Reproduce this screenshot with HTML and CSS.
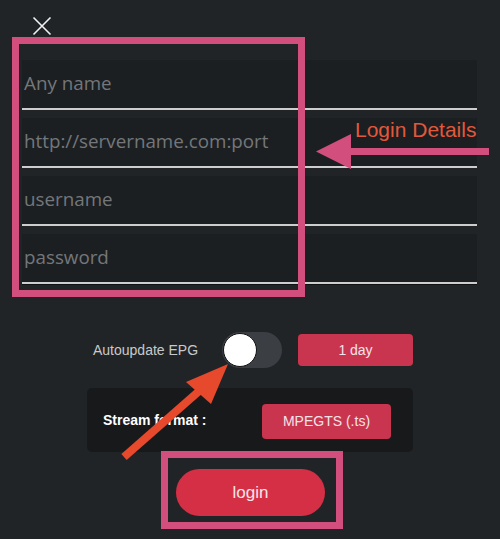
FILE: index.html
```html
<!DOCTYPE html>
<html>
<head>
<meta charset="utf-8">
<link rel="stylesheet" href="styles.css">
</head>
<body>
<div class="screen">
  <div class="topbar">
    <svg class="close" width="20" height="20" viewBox="0 0 20 20"><path d="M1.5 1.5 L18.5 18.5 M18.5 1.5 L1.5 18.5" stroke="#f2f2f2" stroke-width="1.6" fill="none"/></svg>
  </div>
  <div class="fields">
    <div class="field"><span class="ph">Any name</span></div>
    <div class="field"><span class="ph">http://servername.com:port</span></div>
    <div class="field"><span class="ph">username</span></div>
    <div class="field"><span class="ph">password</span></div>
  </div>
  <div class="epg-row">
    <span class="epg-label">Autoupdate EPG</span>
    <div class="toggle"><div class="knob"></div></div>
    <div class="btn btn-day">1 day</div>
  </div>
  <div class="stream-box">
    <span class="stream-label">Stream format :</span>
    <div class="btn btn-format">MPEGTS (.ts)</div>
  </div>
  <div class="login-wrap">
    <div class="login-btn">login</div>
  </div>

  <div class="hl hl-fields"></div>
  <div class="hl hl-login"></div>
  <div class="note">Login Details</div>
  <svg class="arrows" width="500" height="539" viewBox="0 0 500 539">
    <rect x="346" y="148" width="143" height="7" fill="#d24f7d"/>
    <polygon points="316,151.5 351,134 351,169" fill="#d24f7d"/>
    <line x1="124" y1="457" x2="206" y2="385" stroke="#e6492c" stroke-width="8"/>
    <polygon points="228,364 186,382 211,404" fill="#e6492c"/>
  </svg>
</div>
</body>
</html>
```
FILE: styles.css
```css
html, body {
  margin: 0;
  padding: 0;
  background: #212427;
}
.screen {
  position: relative;
  width: 500px;
  height: 539px;
  overflow: hidden;
  background: #212427;
  font-family: "Liberation Sans", Arial, sans-serif;
}
.topbar {
  height: 52px;
  padding-left: 32px;
  padding-top: 16px;
  box-sizing: border-box;
}
.close { display: block; }
.fields {
  margin: 0 23px 0 22px;
  display: flex;
  flex-direction: column;
}
.field {
  height: 58px;
  box-sizing: border-box;
  display: flex;
  align-items: center;
  padding-left: 2px;
  padding-top: 6px;
  background: linear-gradient(#212427 0, #212427 8px, #1c1f22 8px);
  border-bottom: 2px solid #cdcdcd;
  box-shadow: 0 1px 0 #0f1112;
}
.ph {
  font-family: "Open Sans", sans-serif;
  font-size: 18.8px;
  color: #74777a;
}
.epg-row {
  display: flex;
  align-items: center;
  margin-top: 48px;
  padding-left: 93px;
  height: 36px;
}
.epg-label {
  font-size: 14px;
  color: #c9c9c9;
  width: 129px;
}
.toggle {
  width: 60px;
  height: 36px;
  border-radius: 18px;
  background: #3b3e43;
  position: relative;
  margin-right: 16px;
}
.knob {
  position: absolute;
  left: 1px;
  top: 1px;
  width: 32px;
  height: 32px;
  border-radius: 50%;
  background: #ffffff;
  border: 1px solid #111;
}
.btn {
  background: #c9354f;
  color: #f4e4e8;
  font-size: 14px;
  display: flex;
  align-items: center;
  justify-content: center;
  border-radius: 4px;
}
.btn-day {
  width: 115px;
  height: 32px;
}
.stream-box {
  margin: 20px 0 0 87px;
  width: 326px;
  height: 64px;
  box-sizing: border-box;
  background: #17191b;
  border-radius: 5px;
  display: flex;
  align-items: center;
  padding-left: 16px;
}
.stream-label {
  font-size: 14px;
  font-weight: bold;
  color: #ffffff;
  width: 159px;
}
.btn-format {
  width: 129px;
  height: 35px;
  margin-top: 2px;
}
.login-wrap {
  display: flex;
  justify-content: center;
  padding-top: 17px;
  padding-left: 1px;
}
.login-btn {
  width: 149px;
  height: 47px;
  border-radius: 24px;
  background: #d52f45;
  color: #f6e6e9;
  font-size: 17px;
  display: flex;
  align-items: center;
  justify-content: center;
}
.hl {
  position: absolute;
  box-sizing: border-box;
  border: 7px solid #d24f7d;
}
.hl-fields {
  left: 12px;
  top: 37px;
  width: 293px;
  height: 260px;
}
.hl-login {
  left: 161px;
  top: 451px;
  width: 182px;
  height: 78px;
}
.note {
  position: absolute;
  left: 355px;
  top: 118px;
  font-size: 21px;
  color: #e2583a;
}
.arrows {
  position: absolute;
  left: 0;
  top: 0;
}
```
